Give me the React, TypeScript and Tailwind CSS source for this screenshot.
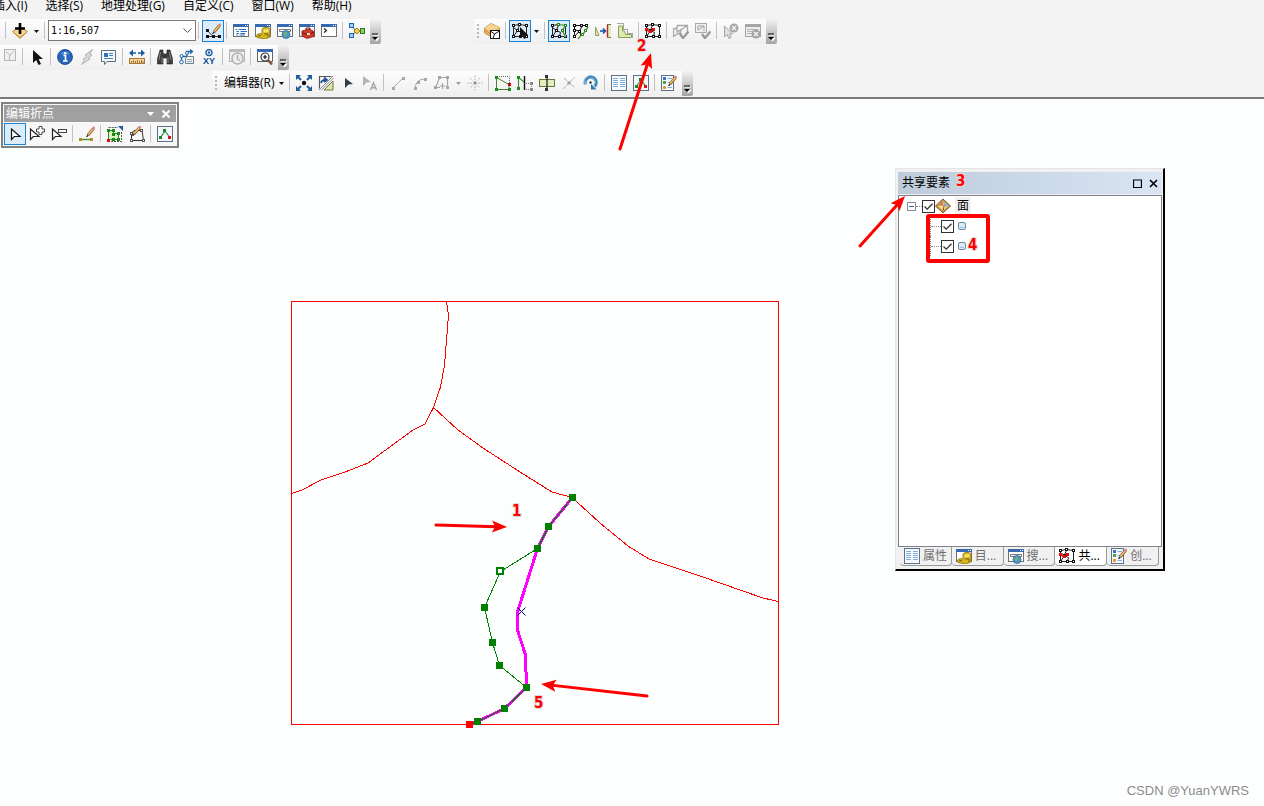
import React from "react";

type Kids = { children?: React.ReactNode };

function Ico({ children }: Kids) {
  return (
    <svg width="16" height="16" viewBox="0 0 16 16" fill="none" className="block shrink-0" aria-hidden="true">
      {children}
    </svg>
  );
}

/* ---------- shared drawing parts ---------- */

function Win() {
  return (
    <>
      <rect x="0.5" y="1.5" width="15" height="12" fill="#fff" stroke="#6f6f6f" />
      <rect x="0" y="1" width="16" height="3" fill="#3868b0" />
      <rect x="12" y="2" width="1" height="1" fill="#fff" />
      <rect x="14" y="2" width="1" height="1" fill="#fff" />
    </>
  );
}

function Nodes({ pts, color = "#111", size = 3 }: { pts: [number, number][]; color?: string; size?: number }) {
  return (
    <>
      {pts.map(([x, y]) => (
        <rect key={`${x}-${y}`} x={x} y={y} width={size} height={size} fill={color} />
      ))}
    </>
  );
}

function Rings({ pts, color = "#111" }: { pts: [number, number][]; color?: string }) {
  return (
    <>
      {pts.map(([x, y]) => (
        <g key={`${x}-${y}`}>
          <rect x={x} y={y} width="3" height="3" fill={color} />
          <rect x={x + 1} y={y + 1} width="1" height="1" fill="#fff" />
        </g>
      ))}
    </>
  );
}

function Pencil() {
  return (
    <>
      <path d="M8 9L13.5 2.5" stroke="#8a5a2a" strokeWidth="2.8" />
      <path d="M8.2 8.6L13 3" stroke="#f2c067" strokeWidth="1.5" />
      <path d="M12.8 3.2L14.6 1.2" stroke="#d98b86" strokeWidth="2.6" />
      <path d="M6.5 10.8L8.2 9" stroke="#222" strokeWidth="1.2" />
    </>
  );
}

function Net() {
  return (
    <>
      <path
        d="M1.5 2.5L7.5 1.5L14.5 2.5V13.5L8.5 13.5H1.5V2.5M7.5 2L5.5 7.5L9.5 9.5L8.5 13.5M1.5 13.5L5.5 7.5L2 5"
        stroke="#222"
      />
      <Rings pts={[[0, 1], [6, 0], [13, 1], [0, 12], [7, 12], [13, 12], [4, 6]]} />
    </>
  );
}

/* ---------- icons ---------- */

const AddData = () => (
  <Ico>
    <path d="M0.5 8.5L8 4L15.5 8.5L8 15.5Z" fill="#f8d78e" stroke="#b58a48" />
    <path d="M1 9.5L8 14L15 9.5" stroke="#cf9a48" />
    <path d="M8 0V11M3 5.5H13" stroke="#000" strokeWidth="2.6" />
  </Ico>
);
const EditPoints = () => (
  <Ico>
    <path d="M2.5 7.5L8 13.5H14M2.5 13.5H8" stroke="#333" />
    <g transform="translate(1 0)">
      <Pencil />
    </g>
    <Nodes pts={[[1, 6], [1, 12], [7, 12], [13, 12]]} />
  </Ico>
);
const Toc = () => (
  <Ico>
    <Win />
    <path d="M2.5 6.5H4M5.5 6.5H13M3.5 8.5H6M7.5 8.5H14M3.5 10.5H6M7.5 10.5H12M3.5 12H5M6.5 12H12" stroke="#2c6ec0" />
  </Ico>
);
const Catalog = () => (
  <Ico>
    <Win />
    <path d="M7 6L9 4.5H13L15 6V14L10 16L2 14.5L1 12.5L4 10.5L7 11Z" fill="#d8b51c" stroke="#8b7410" strokeWidth="0.8" />
    <path d="M8.5 6.5L13.5 6V9L8.5 9.5Z" fill="#f7e368" />
    <path d="M9 11H13V14M3 13L6 12.5" stroke="#6b5a10" />
  </Ico>
);
const Search = () => (
  <Ico>
    <Win />
    <path d="M2.5 6.5H13.5V8.5H2.5Z" stroke="#777" fill="#fff" />
    <circle cx="9" cy="11.5" r="4" fill="#4f94cf" stroke="#356c9c" strokeWidth="0.8" />
    <path d="M6.5 10L9 8.5L10.5 10.5L8.5 12L9.5 14.5L7.5 13Z" fill="#77b45a" />
  </Ico>
);
const Toolbox = () => (
  <Ico>
    <Win />
    <path d="M3 8L10 6L15 8.5V13.5L8 15.5L3 13Z" fill="#d23a2a" stroke="#8b1c12" strokeWidth="0.8" />
    <path d="M3 9.5L8 11.5L15 9.5M7 7V5H11V7" stroke="#7c150e" />
    <rect x="8" y="10" width="3" height="2" fill="#f4dad2" />
  </Ico>
);
const Python = () => (
  <Ico>
    <Win />
    <path d="M3 5.5L5.5 7.5L3 9.5" stroke="#222" strokeWidth="1.2" />
  </Ico>
);
const Model = () => (
  <Ico>
    <path d="M3 3L7 8H13M3 13L7 8" stroke="#555" />
    <rect x="0.5" y="0.5" width="4" height="4" fill="#9fd0f4" stroke="#1d67ad" />
    <rect x="0.5" y="10.5" width="4" height="4" fill="#9fd0f4" stroke="#1d67ad" />
    <path d="M8 5L11 8L8 11L5 8Z" fill="#f7cf4a" stroke="#9a7a10" />
    <rect x="11.5" y="5.5" width="4" height="5" fill="#8fcd6c" stroke="#2d7a1d" />
  </Ico>
);
const Package = () => (
  <Ico>
    <path d="M0.5 5L7 0.5L15.5 4.5V10L7.5 14L0.5 10Z" fill="#efb65c" stroke="#bb8335" strokeWidth="0.8" />
    <path d="M0.5 5L7 0.8L15.5 4.5L7.5 8.5Z" fill="#f8d594" />
    <path d="M0.5 7.5L7.5 11" stroke="#c98f3c" />
    <rect x="6.5" y="7.5" width="9" height="8" fill="#fff" stroke="#111" />
    <path d="M6.5 8L10.5 11L15.5 8M10.5 11L9 15.5" stroke="#111" />
  </Ico>
);
const TopoSelect = () => (
  <Ico>
    <Net />
    <path d="M8 4V15L10.5 12.5L12 16L14 15L12.5 12H16Z" fill="#111" />
  </Ico>
);
const TopoModify = () => (
  <Ico>
    <Net />
    <path d="M7.5 1.5L14.5 2.5L11 7.5L14.5 13.5" stroke="#eef6fc" strokeWidth="2" />
    <path d="M7.5 1.5L14.5 2.5L11 7.5L14.5 13.5" stroke="#2f8a2f" strokeWidth="1.2" />
    <Rings color="#1e8a1e" pts={[[6, 0], [13, 1], [10, 6]]} />
  </Ico>
);
const TopoReshape = () => (
  <Ico>
    <path d="M1.5 2.5L13.5 2.5M1.5 2.5V13.5L6.5 8L9.5 2.5M1.5 7L6.5 8L8 13" stroke="#111" />
    <Rings pts={[[0, 1], [7, 1], [12, 1], [0, 6], [0, 12], [5, 7]]} />
    <path d="M15 4L11 10L9 11L5 16" stroke="#4c9a35" strokeWidth="1.4" />
    <Rings color="#3c8a2c" pts={[[11, 6], [8, 10]]} />
  </Ico>
);
const AlignEdge = () => (
  <Ico>
    <path d="M0.5 4L4 12.5H0.5Z" fill="#dfe8b8" stroke="#8fa35a" />
    <path d="M5 8H10M8 5.5L10.5 8L8 10.5" stroke="#1c4f9c" strokeWidth="1.5" />
    <rect x="13" y="2" width="3" height="12" fill="#e3edbd" />
    <path d="M12.5 2V14" stroke="#c71f1f" strokeWidth="1.4" />
    <path d="M12 1.5H16M12 14.5H16" stroke="#6a7a3a" />
  </Ico>
);
const Generalize = () => (
  <Ico>
    <path d="M1.5 3V14.5H14.5V11.5H8.5L7.5 8H5.5V3Z" fill="#dcebb2" stroke="#88a24f" />
    <path d="M0.5 0.5H6.5V6.5H10.5V10.5H15.5V15.5" stroke="#555" strokeDasharray="1 1" />
  </Ico>
);
const Shared = () => (
  <Ico>
    <Net />
    <path d="M1.5 7L5.5 9L8 6.5" stroke="#d11" strokeWidth="1.4" />
    <Nodes color="#e01010" pts={[[0, 5], [4, 7], [7, 5]]} />
  </Ico>
);
const ValidateArea = () => (
  <Ico>
    <path d="M4 2.5H14.5V10M4 2.5V9L9 6L14.5 2.5M0.5 5.5H4M0.5 5.5V13.5L5 10.5H9M9 6L6 11" stroke="#a8a8a8" strokeWidth="1.3" />
    <path d="M7 11L10 15L15.5 8.5" stroke="#9a9a9a" strokeWidth="2.4" />
  </Ico>
);
const ValidateExtent = () => (
  <Ico>
    <rect x="0.5" y="0.5" width="11" height="9" stroke="#aaa" fill="#eee" />
    <path d="M3 3H9V8M3 3V7L6 5L9 3" stroke="#a8a8a8" />
    <path d="M7 11L10 15L15.5 8.5" stroke="#9a9a9a" strokeWidth="2.4" />
  </Ico>
);
const FixError = () => (
  <Ico>
    <path d="M1.5 3V14L4 11.5L6 15.5L8 14.5L6.5 11H9.5Z" fill="#e2e2e2" stroke="#a4a4a4" />
    <circle cx="11" cy="5" r="4.5" fill="#a8a8a8" />
    <path d="M9 3L13 7M13 3L9 7" stroke="#f2f2f2" strokeWidth="1.5" />
  </Ico>
);
const ErrorInspector = () => (
  <Ico>
    <rect x="0.5" y="1.5" width="15" height="12" fill="#eee" stroke="#a6a6a6" />
    <rect x="0" y="1" width="16" height="3" fill="#a6a6a6" />
    <path d="M2 6.5H13M2 8.5H8M2 10.5H7" stroke="#b4b4b4" />
    <circle cx="11" cy="11" r="4.5" fill="#a4a4a4" />
    <path d="M9 9L13 13M13 9L9 13" stroke="#f2f2f2" strokeWidth="1.5" />
  </Ico>
);
const ClearShape = () => (
  <Ico>
    <rect x="2.5" y="0.5" width="11" height="11" stroke="#b5b5b5" fill="#f1f1f1" />
    <path d="M4 3L8 6L12 2M8 6L7 11" stroke="#b5b5b5" />
  </Ico>
);
const Cursor = () => (
  <Ico>
    <path d="M4 1V14L7.2 11L9.5 16L12 15L9.6 10H14Z" fill="#111" />
  </Ico>
);
const Info = () => (
  <Ico>
    <circle cx="8" cy="8" r="7.4" fill="#2467bd" stroke="#184a90" />
    <path d="M3 5a6 5 0 0 1 10 0Q8 7 3 5Z" fill="#6ea2dd" opacity="0.6" />
    <path d="M6.5 6.5H8.5V12M6 12H10.5" stroke="#fff" strokeWidth="1.6" />
    <rect x="7" y="3" width="2.4" height="2.2" fill="#fff" />
  </Ico>
);
const Bolt = () => (
  <Ico>
    <path d="M13.5 0.5L6 6L8 7.5L4 10L5.5 11L2.5 15.5L11 10L9.5 8.8L13 6L10.8 5Z" fill="#dadada" stroke="#b2b2b2" />
  </Ico>
);
const Popup = () => (
  <Ico>
    <path d="M0.5 1.5H14.5V12.5H6L3.5 15.5V12.5H0.5Z" fill="#f5f8fb" stroke="#5f6b76" />
    <rect x="3" y="4" width="4" height="4" fill="#2d72b8" />
    <path d="M8 4.5H12M8 6.5H12M3 9.5H12" stroke="#3d82c2" />
  </Ico>
);
const Ruler = () => (
  <Ico>
    <path d="M1 4H7M15 4H9" stroke="#1b5ca5" strokeWidth="1.6" />
    <path d="M4 0.5V7.5L0 4ZM12 0.5V7.5L16 4Z" fill="#1b5ca5" />
    <rect x="0.5" y="9.5" width="15" height="5" fill="#f5d49a" stroke="#a87838" />
    <path d="M2.5 12V14M4.5 11V14M6.5 12V14M8.5 11V14M10.5 12V14M12.5 11V14M14 12V14" stroke="#8b5f28" strokeWidth="0.8" />
  </Ico>
);
const Binoculars = () => (
  <Ico>
    <path d="M3 1H6V4L7 5H9L10 4V1H13L15.5 10V15H10V9H6V15H0.5V10Z" fill="#3d3d3d" stroke="#1d1d1d" strokeWidth="0.6" />
    <path d="M3.5 3L2 11M12.5 3L14 11M5 8V14M11 8V14" stroke="#999" strokeWidth="0.8" />
  </Ico>
);
const FindRoute = () => (
  <Ico>
    <path d="M2.5 13V7.5H8V2.5H13M11 0.5L13.5 2.5L11 4.8" stroke="#1f66a8" strokeWidth="1.3" />
    <circle cx="2.5" cy="13" r="1.8" fill="#fff" stroke="#1f66a8" />
    <circle cx="2.5" cy="7" r="1.5" fill="#fff" stroke="#1f66a8" />
    <circle cx="8" cy="4" r="1.5" fill="#fff" stroke="#1f66a8" />
    <path d="M6.5 9.5L8.5 7.5H14.5V14.5H6.5Z" fill="#f7f4ea" stroke="#6e7f8e" />
    <path d="M8 10.5H13M8 12.5H13" stroke="#7ba4cb" />
  </Ico>
);
const GoToXY = () => (
  <Ico>
    <circle cx="8" cy="3.5" r="3" stroke="#1c62a8" strokeWidth="1.4" />
    <circle cx="8" cy="3.5" r="1.2" fill="#1c62a8" />
    <text x="8" y="15" textAnchor="middle" fontSize="9" fontWeight="700" fill="#0f4d92" className="font-['Liberation_Sans',sans-serif]">
      XY
    </text>
  </Ico>
);
const Clock = () => (
  <Ico>
    <rect x="0.5" y="0.5" width="15" height="12" fill="#eee" stroke="#b4b4b4" />
    <rect x="0" y="0" width="16" height="3" fill="#bbb" />
    <circle cx="8.5" cy="9.5" r="5.5" fill="#ececec" stroke="#b0b0b0" strokeWidth="1.4" />
    <path d="M8.5 6V10L11 11.5" stroke="#aaa" strokeWidth="1.3" />
  </Ico>
);
const Viewer = () => (
  <Ico>
    <rect x="0.5" y="0.5" width="15" height="12" fill="#fff" stroke="#666" />
    <rect x="0" y="0" width="16" height="3" fill="#3868b0" />
    <circle cx="8" cy="8" r="4" fill="#f7fbff" stroke="#333" strokeWidth="1.2" />
    <path d="M6 8H10M8 6V10" stroke="#111" strokeWidth="1.2" />
    <path d="M11 11L15 15.5" stroke="#84533d" strokeWidth="2.4" />
  </Ico>
);
const FullExtent = () => (
  <Ico>
    <circle cx="8" cy="8" r="2.2" fill="#111" />
    <path d="M5 5L1 1M11 5L15 1M5 11L1 15M11 11L15 15" stroke="#1c5c9f" strokeWidth="2" />
    <path d="M0 0H5L0 5ZM16 0H11L16 5ZM0 16H5L0 11ZM16 16H11L16 11Z" fill="#1c5c9f" />
  </Ico>
);
const Transfer = () => (
  <Ico>
    <path d="M1.5 14.5V1.5H14.5" fill="none" stroke="#555" strokeWidth="1.2" />
    <path d="M2 15L15 2" stroke="#fff" strokeWidth="3" />
    <path d="M1 15L15 1M3 15.5L15.5 3" stroke="#777" strokeWidth="0.9" />
    <path d="M15 6V15H6Z" fill="#dceaa6" stroke="#6c7b44" />
    <path d="M3 8Q4 4.5 8 5M6 2.5L9 5L6 7" stroke="#1b4f96" strokeWidth="1.7" />
  </Ico>
);
const EditTool = () => (
  <Ico>
    <path d="M5 3L13 9L8.5 9.5L5 13Z" fill="#333b44" />
  </Ico>
);
const EditAnno = () => (
  <Ico>
    <path d="M1 1L9 7L4.5 7.5L1 11Z" fill="#b4b4b4" />
    <path d="M8.5 15L11.5 8L14.5 15M9.5 12.8H13.5" stroke="#a9a9a9" strokeWidth="1.5" />
  </Ico>
);
const StraightSeg = () => (
  <Ico>
    <path d="M3 13L13 3" stroke="#aaa" />
    <Nodes color="#a8a8a8" pts={[[2, 12], [12, 2]]} />
  </Ico>
);
const ArcSeg = () => (
  <Ico>
    <path d="M3 13Q4 4 13 4" stroke="#aaa" />
    <Nodes color="#a8a8a8" pts={[[2, 12], [5, 6], [12, 3]]} />
  </Ico>
);
const Trace = () => (
  <Ico>
    <path d="M2 12L5.5 2.5H13.5V12.5M2 12.5H6M8.5 8V14M5.5 11H11.5" stroke="#a6a6a6" strokeWidth="1.2" />
    <Nodes color="#a6a6a6" pts={[[4, 1], [12, 1], [0, 11], [12, 11]]} />
  </Ico>
);
const PointBurst = () => (
  <Ico>
    <path d="M8 0.5V5M8 11V15.5M0.5 8H5M11 8H15.5M3 3L5.5 5.5M10.5 10.5L13 13M13 3L10.5 5.5M5.5 10.5L3 13" stroke="#b0b0b0" strokeDasharray="2 1" />
    <rect x="6.5" y="6.5" width="3" height="3" fill="#8f8f8f" />
  </Ico>
);
const EditVerts = () => (
  <Ico>
    <path d="M1.5 2.5L14 9.5V14.5H1.5Z" stroke="#4d7f30" />
    <path d="M4 1.5H14.5V8" stroke="#666" strokeDasharray="1 1" />
    <Nodes color="#179017" pts={[[0, 1], [0, 13], [13, 13]]} />
    <rect x="13" y="8" width="3" height="3" fill="#c00d0d" />
  </Ico>
);
const Reshape = () => (
  <Ico>
    <path d="M1.5 2V14M1.5 2.5L7 7" stroke="#4d8f30" strokeWidth="1.2" />
    <path d="M7.5 1V15" stroke="#111" strokeWidth="1.4" />
    <path d="M9 8.5H14.5V14.5H8.5" stroke="#777" strokeDasharray="1 1" />
    <Nodes color="#179017" pts={[[0, 1], [0, 12]]} />
    <Nodes color="#888" pts={[[13, 7], [13, 13]]} />
  </Ico>
);
const CutPoly = () => (
  <Ico>
    <rect x="0.5" y="4.5" width="15" height="7" fill="#e2eebd" stroke="#66793c" />
    <path d="M8 1V15" stroke="#222" strokeWidth="1.3" />
    <Nodes color="#333" pts={[[6, 0], [6, 13]]} />
  </Ico>
);
const SplitTool = () => (
  <Ico>
    <path d="M2 14L14 2M3 3L13 12" stroke="#b0b0b0" strokeDasharray="4 1" />
    <rect x="6.5" y="6.5" width="3" height="3" fill="#a0a0a0" />
  </Ico>
);
const Rotate = () => (
  <Ico>
    <path d="M2.5 9.5A5.5 5.5 0 1 1 11.5 11.5" stroke="#6eabd3" strokeWidth="3.4" />
    <path d="M3 6A5 5 0 0 1 13.5 8Q13 10 12 11" stroke="#2e78ad" strokeWidth="1.2" />
    <path d="M8 9V14.5H13.5Z" fill="#2b77ad" />
    <circle cx="7.5" cy="7.5" r="1.2" fill="#333" />
  </Ico>
);
const Attributes = () => (
  <Ico>
    <rect x="0.5" y="0.5" width="15" height="15" fill="#f7fbff" stroke="#5d7086" />
    <path d="M2 3.5H7M9 3.5H14M2 5.5H7M9 5.5H14M2 7.5H7M9 7.5H14M2 9.5H7M9 9.5H14M2 11.5H7M9 11.5H14" stroke="#7fb0dc" />
  </Ico>
);
const Sketch = () => (
  <Ico>
    <rect x="0.5" y="0.5" width="15" height="15" fill="#f4f8fc" stroke="#5d7086" />
    <path d="M3.5 11.5L8 5L12.5 11" stroke="#2b8f36" strokeWidth="1.2" />
    <Nodes color="#128a20" pts={[[2, 10], [6, 3]]} />
    <rect x="11" y="10" width="3" height="3" fill="#d31515" />
  </Ico>
);
const Create = () => (
  <Ico>
    <rect x="0.5" y="0.5" width="12" height="15" fill="#f5f9fd" stroke="#5d7086" />
    <rect x="2" y="2" width="3" height="3" fill="#3e74c4" />
    <rect x="2" y="6" width="3" height="3" fill="#4f9f43" />
    <rect x="2" y="11" width="3" height="3" fill="#e2a032" />
    <path d="M6.5 3.5H11M6.5 7.5H11M6.5 12.5H11" stroke="#79aee0" />
    <g transform="translate(1 0)">
      <Pencil />
    </g>
  </Ico>
);
const Arrow = () => (
  <Ico>
    <path d="M4.5 3V13.5L7.3 10.5H13Z" fill="#fff" stroke="#111" strokeWidth="1.2" />
  </Ico>
);
const ArrowPlus = () => (
  <Ico>
    <path d="M1.5 3V13.5L4.3 10.5H10Z" fill="#fff" stroke="#222" strokeWidth="1.2" />
    <path d="M10 0.5H13V3H15.5V6H13V8.5H10V6H7.5V3H10Z" fill="#fff" stroke="#444" />
  </Ico>
);
const ArrowMinus = () => (
  <Ico>
    <path d="M1.5 3V13.5L4.3 10.5H10Z" fill="#fff" stroke="#222" strokeWidth="1.2" />
    <rect x="7.5" y="3.5" width="8" height="3" fill="#fff" stroke="#444" />
  </Ico>
);
const Freehand = () => (
  <Ico>
    <path d="M1 13.5H12" stroke="#4d8f30" strokeWidth="1.4" />
    <g transform="translate(1 0)">
      <Pencil />
    </g>
    <Nodes color="#b48e27" pts={[[0, 12], [11, 12]]} />
  </Ico>
);
const FinishSketch = () => (
  <Ico>
    <path d="M1.5 1.5H11M14.5 6V15.5H4" stroke="#555" strokeDasharray="2 1" />
    <path d="M1.5 4.5H6.5V7.5H11.5V13.5H1.5Z" fill="#dff0c0" stroke="#2b8b2b" />
    <Nodes color="#188a18" pts={[[0, 3], [5, 3], [5, 7], [10, 6], [10, 12], [5, 12]]} />
    <path d="M11 0H16V5Z" fill="#1c5ca5" />
    <rect x="0" y="13" width="3" height="3" fill="#d01010" />
  </Ico>
);
const SketchEdit = () => (
  <Ico>
    <path d="M2.5 14.5V7L5 4.5H13L14.5 14.5Z" fill="#fafafa" stroke="#333" />
    <Rings color="#555" pts={[[11, 3], [13, 13], [1, 13], [1, 6]]} />
    <g transform="translate(-3 -1)">
      <Pencil />
    </g>
  </Ico>
);
const LayerDiamond = () => (
  <Ico>
    <path d="M0.5 8L8 1L15.5 8L8 15Z" fill="#c79a4f" stroke="#7b5725" />
    <path d="M3 8L8 3.5L13 8L8 12.5Z" fill="#f6e08a" />
    <path d="M8 3.5L13 8L9 8.5Z" fill="#7bb0e4" />
    <path d="M3 8L8 3.5L7.5 7Z" fill="#e85b35" />
    <path d="M7.5 7L9 8.5L8 12.5" stroke="#8a4b1b" />
  </Ico>
);

/* ---------- toolbar pieces ---------- */

function Tool({ label, active, children }: { label: string; active?: boolean } & Kids) {
  return (
    <button
      type="button"
      aria-label={label}
      className={
        active
          ? "flex size-[22px] shrink-0 items-center justify-center border border-[#1883d7] bg-[#dcebf8]"
          : "flex size-[22px] shrink-0 items-center justify-center"
      }
    >
      {children}
    </button>
  );
}

function Sep() {
  return <span className="ml-[2px] mr-[3px] mt-[2px] h-[17px] w-px shrink-0 self-start bg-[#c2c2c2]" />;
}

function Drop({ label, muted }: { label: string; muted?: boolean }) {
  return (
    <button type="button" aria-label={label} className="flex h-[22px] w-[11px] shrink-0 items-center justify-center">
      <svg width="5" height="3" viewBox="0 0 5 3" aria-hidden="true">
        <path d="M0 0H5L2.5 3Z" fill={muted ? "#a0a0a0" : "#111"} />
      </svg>
    </button>
  );
}

function Grip() {
  return (
    <svg width="7" height="22" viewBox="0 0 7 22" className="shrink-0" aria-hidden="true">
      {[4, 8, 12, 16].map((y) => (
        <rect key={y} x="3" y={y} width="2" height="2" fill="#b8b8b8" />
      ))}
    </svg>
  );
}

function Bar({ children, className = "" }: Kids & { className?: string }) {
  return (
    <div className={`flex h-[25px] shrink-0 ${className}`}>
      <div className="flex items-start bg-linear-to-b from-[#fdfdfd] to-[#efefef] pr-[2px] pt-px">{children}</div>
      <button
        type="button"
        aria-label="工具条选项"
        className="flex w-[11px] items-end justify-center rounded-r-xs bg-linear-to-b from-[#f2f2f2] to-[#a4a4a4] pb-[3px]"
      >
        <svg width="7" height="8" viewBox="0 0 7 8" aria-hidden="true">
          <path d="M1 2H7M2 5H7L4.5 8Z" stroke="#fff" fill="#fff" />
          <path d="M0 1H6" stroke="#000" />
          <path d="M0 4H6L3 7Z" fill="#000" />
        </svg>
      </button>
    </div>
  );
}

const menus = ["插入(I)", "选择(S)", "地理处理(G)", "自定义(C)", "窗口(W)", "帮助(H)"];

function Header() {
  return (
    <header className="flex flex-col border-b-2 border-[#7a7a7a] bg-[#f3f3f3] pb-px">
      <nav className="-ml-[7px] flex h-[19px] items-start gap-[18px]">
        {menus.map((m) => (
          <button key={m} type="button" className="shrink-0 whitespace-nowrap text-xs leading-[11px]">
            {m}
          </button>
        ))}
      </nav>
      <div className="flex flex-col gap-px">
        <div className="flex">
          <Bar>
            <span className="w-[3px]" />
            <Sep />
            <Tool label="添加数据"><AddData /></Tool>
            <Drop label="添加数据选项" />
            <Sep />
            <div className="relative flex h-[21px] w-[148px] shrink-0">
              <select
                aria-label="地图比例"
                className="h-full w-full appearance-none rounded-none border border-[#7a7a7a] bg-white pl-[2px] font-['DejaVu_Sans_Mono',monospace] text-[10px] leading-none outline-none"
              >
                <option>1:16,507</option>
              </select>
              <svg width="9" height="5" viewBox="0 0 9 5" className="pointer-events-none absolute right-1 top-2" aria-hidden="true">
                <path d="M0.5 0.5L4.5 4.3L8.5 0.5" fill="none" stroke="#555" />
              </svg>
            </div>
            <Sep />
            <Tool label="编辑器工具条" active><EditPoints /></Tool>
            <Sep />
            <Tool label="内容列表"><Toc /></Tool>
            <Tool label="目录"><Catalog /></Tool>
            <Tool label="搜索"><Search /></Tool>
            <Tool label="工具箱"><Toolbox /></Tool>
            <Tool label="Python"><Python /></Tool>
            <Sep />
            <Tool label="模型构建器"><Model /></Tool>
          </Bar>
          <Bar className="ml-[93px]">
            <Grip />
            <Tool label="选择拓扑"><Package /></Tool>
            <Sep />
            <Tool label="拓扑编辑工具" active><TopoSelect /></Tool>
            <Drop label="拓扑编辑选项" />
            <Sep />
            <Tool label="修改边" active><TopoModify /></Tool>
            <Tool label="修整边"><TopoReshape /></Tool>
            <Tool label="对齐边"><AlignEdge /></Tool>
            <Tool label="概化边"><Generalize /></Tool>
            <Sep />
            <Tool label="共享要素"><Shared /></Tool>
            <Sep />
            <Tool label="验证区域"><ValidateArea /></Tool>
            <Tool label="验证范围"><ValidateExtent /></Tool>
            <Sep />
            <Tool label="修复错误"><FixError /></Tool>
            <Tool label="错误检查器"><ErrorInspector /></Tool>
          </Bar>
        </div>
        <Bar>
          <button type="button" aria-label="清除" className="flex h-[22px] w-5 shrink-0 items-center justify-center">
            <ClearShape />
          </button>
          <Sep />
          <Tool label="选择元素"><Cursor /></Tool>
          <Sep />
          <Tool label="识别"><Info /></Tool>
          <Tool label="超链接"><Bolt /></Tool>
          <Tool label="弹出窗口"><Popup /></Tool>
          <Sep />
          <Tool label="测量"><Ruler /></Tool>
          <Sep />
          <Tool label="查找"><Binoculars /></Tool>
          <Tool label="查找路径"><FindRoute /></Tool>
          <Tool label="转到坐标"><GoToXY /></Tool>
          <Sep />
          <Tool label="时间滑块"><Clock /></Tool>
          <Sep />
          <Tool label="查看器窗口"><Viewer /></Tool>
        </Bar>
        <Bar className="ml-[212px]">
          <Grip />
          <button type="button" className="ml-[5px] h-[22px] w-[52px] shrink-0 whitespace-nowrap text-left text-xs">
            编辑器(R)
          </button>
          <Drop label="编辑器菜单" />
          <Sep />
          <Tool label="缩放至全部"><FullExtent /></Tool>
          <Tool label="传递"><Transfer /></Tool>
          <Tool label="编辑工具"><EditTool /></Tool>
          <Tool label="编辑注记工具"><EditAnno /></Tool>
          <Sep />
          <Tool label="直线段"><StraightSeg /></Tool>
          <Tool label="弧线段"><ArcSeg /></Tool>
          <Tool label="追踪"><Trace /></Tool>
          <Drop label="追踪选项" muted />
          <Tool label="点"><PointBurst /></Tool>
          <Sep />
          <Tool label="编辑折点"><EditVerts /></Tool>
          <Tool label="整形要素"><Reshape /></Tool>
          <Tool label="裁剪面"><CutPoly /></Tool>
          <Tool label="分割工具"><SplitTool /></Tool>
          <Tool label="旋转工具"><Rotate /></Tool>
          <Sep />
          <Tool label="属性"><Attributes /></Tool>
          <Tool label="草图属性"><Sketch /></Tool>
          <Sep />
          <Tool label="创建要素"><Create /></Tool>
        </Bar>
      </div>
    </header>
  );
}

/* ---------- floating vertex toolbar ---------- */

function VertexToolbar() {
  return (
    <section aria-label="编辑折点" className="absolute left-px top-[3px] border-2 border-[#828282] bg-[#f7f7f7] p-px">
      <div className="flex h-[17px] items-center bg-[#a0a0a0] px-[2px] text-xs leading-4 text-white">
        <span className="grow">编辑折点</span>
        <button type="button" aria-label="选项" className="flex w-4 justify-center">
          <svg width="7" height="4" viewBox="0 0 7 4" aria-hidden="true"><path d="M0 0H7L3.5 4Z" fill="#fff" /></svg>
        </button>
        <button type="button" aria-label="关闭" className="flex w-4 justify-center">
          <svg width="8" height="8" viewBox="0 0 8 8" aria-hidden="true"><path d="M0.5 0.5L7.5 7.5M7.5 0.5L0.5 7.5" stroke="#fff" strokeWidth="2" /></svg>
        </button>
      </div>
      <div className="flex pt-px">
        <Tool label="修改草图折点" active><Arrow /></Tool>
        <Tool label="添加折点"><ArrowPlus /></Tool>
        <Tool label="删除折点"><ArrowMinus /></Tool>
        <Sep />
        <Tool label="延续要素"><Freehand /></Tool>
        <Sep />
        <Tool label="完成草图"><FinishSketch /></Tool>
        <Tool label="修改草图"><SketchEdit /></Tool>
        <Sep />
        <Tool label="草图属性"><Sketch /></Tool>
      </div>
    </section>
  );
}

/* ---------- shared features panel ---------- */

function Check({ label }: { label: string }) {
  return (
    <span className="relative block size-[13px] shrink-0">
      <input type="checkbox" defaultChecked aria-label={label} className="peer block size-[13px] appearance-none border border-[#333] bg-white" />
      <svg width="13" height="13" viewBox="0 0 13 13" className="pointer-events-none absolute inset-0 hidden peer-checked:block" aria-hidden="true">
        <path d="M2.5 6.5L5.2 9.2L10.5 3.8" fill="none" stroke="#333" strokeWidth="1.3" />
      </svg>
    </span>
  );
}

function ChildRow({ label }: { label: string }) {
  return (
    <li className="flex h-5 items-center">
      <span className="h-full w-px border-l border-dotted border-[#888]" />
      <span className="w-[10px] border-t border-dotted border-[#888]" />
      <Check label={label} />
      <svg width="8" height="8" viewBox="0 0 8 8" className="ml-1" aria-hidden="true">
        <rect x="0.5" y="0.5" width="7" height="7" rx="1.5" fill="#dcecf7" stroke="#6888a0" />
        <path d="M2 5.5H6" stroke="#9fc0d8" />
      </svg>
    </li>
  );
}

const tabs = [
  { name: "属性", icon: <Attributes />, active: false },
  { name: "目...", icon: <Catalog />, active: false },
  { name: "搜...", icon: <Search />, active: false },
  { name: "共...", icon: <Shared />, active: true },
  { name: "创...", icon: <Create />, active: false },
];

function SharedPanel() {
  return (
    <aside aria-label="共享要素" className="absolute left-[895px] top-[69px] flex h-[403px] w-[270px] flex-col border-b-2 border-r-2 border-l border-t border-b-black border-r-black border-l-[#e4e4e4] border-t-[#e4e4e4] bg-[#f1f1f1] pl-[2px] pr-px pt-[2px]">
      <div className="mt-px flex h-[22px] shrink-0 items-center bg-linear-to-r from-[#bdcbdb] to-[#d9e5f3] pl-1 pr-px text-xs">
        <h2 className="grow">共享要素</h2>
        <button type="button" aria-label="最大化" className="flex w-4 justify-center">
          <svg width="9" height="9" viewBox="0 0 9 9" aria-hidden="true"><path d="M0.5 1H8.5V8.5H0.5Z" fill="none" stroke="#000" strokeWidth="1.2" /></svg>
        </button>
        <button type="button" aria-label="关闭" className="flex w-4 justify-center">
          <svg width="9" height="9" viewBox="0 0 9 9" aria-hidden="true"><path d="M1 1L8 8M8 1L1 8" stroke="#000" strokeWidth="1.6" /></svg>
        </button>
      </div>
      <div className="mt-px grow border border-[#7d828c] bg-white pl-2">
        <div className="flex h-5 items-center">
          <button type="button" aria-label="折叠" className="flex size-[9px] items-center justify-center border border-[#8c8c8c] bg-white">
            <span className="h-px w-[5px] bg-[#3a5fa8]" />
          </button>
          <span className="w-[6px] border-t border-dotted border-[#888]" />
          <Check label="面" />
          <LayerDiamond />
          <span className="ml-1 bg-[#f1f1f1] px-[2px] text-xs leading-[18px]">面</span>
        </div>
        <ul className="ml-[23px]">
          <ChildRow label="要素 1" />
          <ChildRow label="要素 2" />
        </ul>
      </div>
      <div role="tablist" className="flex h-[22px] shrink-0 pl-[2px] pr-[3px]">
        {tabs.map((t) => (
          <button
            key={t.name}
            type="button"
            role="tab"
            aria-selected={t.active}
            className={
              t.active
                ? "flex h-[19px] flex-1 items-center gap-[3px] whitespace-nowrap rounded-b border-b border-r border-[#999] bg-white pl-1 text-xs text-black"
                : "flex h-[19px] flex-1 items-center gap-[3px] whitespace-nowrap rounded-b border-b border-r border-[#999] pl-1 text-xs text-[#6e6e6e]"
            }
          >
            {t.icon}
            {t.name}
          </button>
        ))}
      </div>
    </aside>
  );
}

/* ---------- map drawing ---------- */

const vertices: [number, number][] = [
  [572, 497], [548, 526], [537, 548], [484, 607], [492, 642], [499, 665], [526, 687], [504, 708], [477, 721],
];

function MapDrawing() {
  return (
    <svg width="1264" height="707" viewBox="0 99 1264 707" fill="none" className="absolute left-0 top-0" role="img" aria-label="地图">
      <g stroke="#f00" shapeRendering="crispEdges">
        <rect x="291.5" y="301.5" width="487" height="423" />
        <path d="M446.5 301.5L448.5 315L444.5 365L440.5 387L433.5 407.5" />
        <path d="M433.5 407.5L425 424L413 430L368 463L345 472L321 480L302 490L291.5 493.5" />
        <path d="M433.5 407.5L458 430L483 448L520 472L552 492L572 497.5L600 523L628 546L649 559L700 576L763 598L778.5 601.5" />
      </g>
      <path d="M572.5 497.5L548.5 526.5L537.5 548.5L517.5 612V630L525.5 655L526.5 687.5L504.5 708.5L477.5 721.5L469.5 724.5" stroke="#f0f" strokeWidth="3" shapeRendering="crispEdges" />
      <path d="M572.5 497.5L548.5 526.5L537.5 548.5L500.5 571.5L484.5 607.5L492.5 642.5L499.5 665.5L526.5 687.5L504.5 708.5L477.5 721.5L469.5 724.5" stroke="#008000" shapeRendering="crispEdges" />
      <path d="M517.5 607.5L525.5 615.5M525.5 607.5L517.5 615.5" stroke="#000080" />
      {vertices.map(([x, y]) => (
        <rect key={`${x}-${y}`} x={x - 3} y={y - 3} width="7" height="7" fill="#008000" />
      ))}
      <rect x="497" y="568" width="6" height="6" fill="#fff" stroke="#008000" strokeWidth="2" />
      <rect x="466" y="721" width="7" height="7" fill="#f00" />
    </svg>
  );
}

/* ---------- annotations ---------- */

const arrows: [number, number, number, number][] = [
  [436, 525, 507, 527],
  [620, 149, 651, 53],
  [860, 246, 905, 196],
  [647, 696, 541, 684],
];

const marks: [string, number, number][] = [
  ["1", 512, 516],
  ["2", 637, 51],
  ["3", 956, 186],
  ["4", 968, 250],
  ["5", 534, 708],
];

function Annotations() {
  return (
    <svg width="1264" height="806" viewBox="0 0 1264 806" className="pointer-events-none absolute left-0 top-0">
      {arrows.map(([x1, y1, x2, y2]) => {
        const len = Math.hypot(x2 - x1, y2 - y1);
        const angle = (Math.atan2(y2 - y1, x2 - x1) * 180) / Math.PI;
        return (
          <g key={x1} transform={`translate(${x2} ${y2}) rotate(${angle})`}>
            <path d={`M${-len} 0H-10`} stroke="#f00" strokeWidth="3" strokeLinecap="round" />
            <path d="M0 0L-15 -6L-12 0L-15 6Z" fill="#f00" />
          </g>
        );
      })}
      <rect x="928" y="216" width="60" height="45" rx="1" fill="none" stroke="#f00" strokeWidth="4" />
      {marks.map(([t, x, y]) => (
        <text
          key={t}
          x={x}
          y={y}
          fontSize="15"
          fontWeight="700"
          fill="#f00"
          stroke="#dcdcdc"
          strokeWidth="2"
          paintOrder="stroke"
          className="font-['DejaVu_Sans_Condensed','DejaVu_Sans',sans-serif]"
        >
          {t}
        </text>
      ))}
    </svg>
  );
}

export default function App() {
  return (
    <div className="relative flex min-h-screen flex-col overflow-hidden bg-[#fdfefe] font-['Open_Sans','Noto_Sans_CJK_SC',sans-serif] text-black">
      <Header />
      <main className="relative min-h-[707px] grow">
        <MapDrawing />
        <VertexToolbar />
        <SharedPanel />
        <p className="absolute bottom-[7px] right-[15px] font-['Liberation_Sans',sans-serif] text-[13px] leading-4 text-[#8c8c8c]">CSDN @YuanYWRS</p>
      </main>
      <Annotations />
    </div>
  );
}
